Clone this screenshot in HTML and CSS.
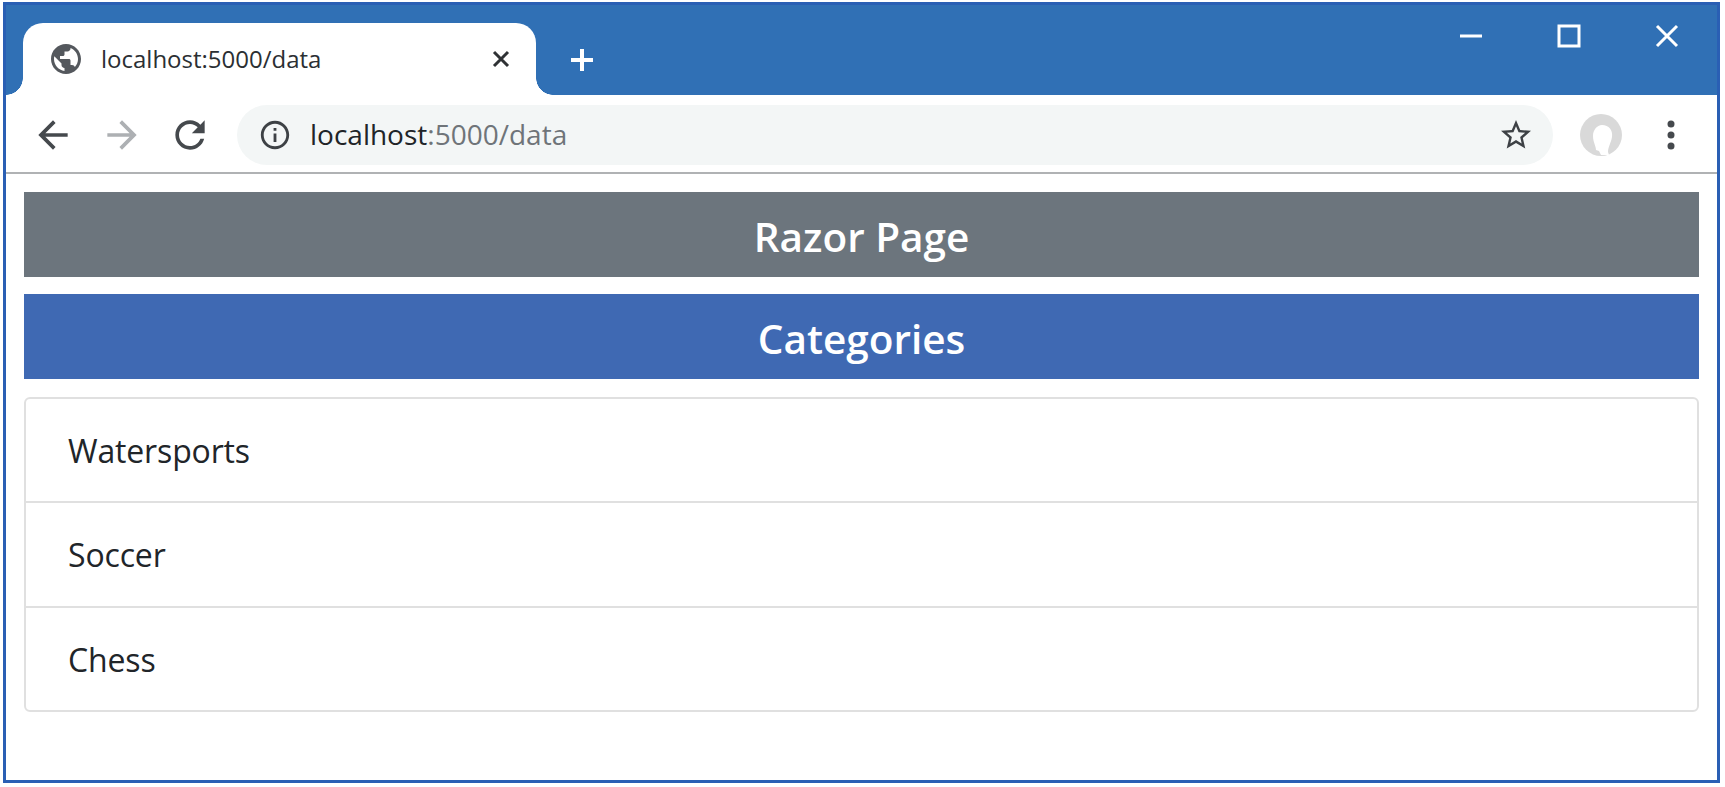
FILE: index.html
```html
<!DOCTYPE html>
<html lang="en">
<head>
    <meta charset="UTF-8">
    <title>localhost:5000/data</title>
    <link rel="stylesheet" href="styles.css">
</head>
<body>
    <div class="window">
        <div class="titlebar">
            <div class="tab">
                <svg class="tab-favicon" viewBox="0 0 24 24"><path d="M12 2C6.48 2 2 6.48 2 12s4.48 10 10 10 10-4.48 10-10S17.52 2 12 2zm-1 17.93c-3.95-.49-7-3.85-7-7.93 0-.62.08-1.21.21-1.79L9 15v1c0 1.1.9 2 2 2v1.93zm6.9-2.54c-.26-.81-1-1.39-1.9-1.39h-1v-3c0-.55-.45-1-1-1H8v-2h2c.55 0 1-.45 1-1V7h2c1.1 0 2-.9 2-2v-.41c2.93 1.19 5 4.06 5 7.41 0 2.08-.8 3.97-2.1 5.39z"/></svg>
                <span class="tab-title">localhost:5000/data</span>
                <svg class="tab-close" viewBox="0 0 18 18"><path d="M2 2l14 14M16 2L2 16"/></svg>
            </div>
            <svg class="new-tab" viewBox="0 0 26 26"><path d="M13 2v22M2 13h22"/></svg>
            <div class="window-controls">
                <div class="control"><svg viewBox="0 0 24 24"><path d="M1 12h22"/></svg></div>
                <div class="control"><svg viewBox="0 0 24 24"><path d="M2 2h20v20H2z"/></svg></div>
                <div class="control"><svg viewBox="0 0 24 24"><path d="M2 2l20 20M22 2L2 22"/></svg></div>
            </div>
        </div>

        <div class="toolbar">
            <svg class="nav-icon" viewBox="0 0 24 24"><path d="M20 11H7.83l5.59-5.59L12 4l-8 8 8 8 1.41-1.41L7.83 13H20v-2z"/></svg>
            <svg class="nav-icon disabled" viewBox="0 0 24 24"><path d="M4 11h12.17l-5.59-5.59L12 4l8 8-8 8-1.41-1.41L16.17 13H4v-2z"/></svg>
            <svg class="nav-icon" viewBox="0 0 24 24"><path d="M17.65 6.35C16.2 4.9 14.21 4 12 4c-4.42 0-7.99 3.58-7.99 8s3.57 8 7.99 8c3.73 0 6.84-2.55 7.73-6h-2.08c-.82 2.33-3.04 4-5.65 4-3.31 0-6-2.69-6-6s2.69-6 6-6c1.66 0 3.14.69 4.22 1.78L13 11h7V4l-2.35 2.35z"/></svg>
            <div class="omnibox">
                <svg class="info-icon" viewBox="0 0 24 24"><path d="M11 7h2v2h-2zm0 4h2v6h-2zm1-9C6.48 2 2 6.48 2 12s4.48 10 10 10 10-4.48 10-10S17.52 2 12 2zm0 18c-4.41 0-8-3.59-8-8s3.59-8 8-8 8 3.59 8 8-3.59 8-8 8z"/></svg>
                <span class="url">localhost<span class="url-path">:5000/data</span></span>
                <svg class="star-icon" viewBox="0 0 24 24"><path d="M22 9.24l-7.19-.62L12 2 9.19 8.63 2 9.24l5.46 4.73L5.82 21 12 17.27 18.18 21l-1.63-7.03L22 9.24zM12 15.4l-3.76 2.27 1-4.28-3.32-2.88 4.38-.38L12 6.1l1.71 4.04 4.38.38-3.32 2.88 1 4.28L12 15.4z"/></svg>
            </div>
            <svg class="avatar" viewBox="0 0 42 42">
                <circle class="avatar-bg" cx="21" cy="21" r="21"/>
                <path class="avatar-hole" d="M22 11c7 0 11 5 10 12-1 6-4 10-4 15l1 3h-8l-2-4-3-1c0-4-3-8-3-14 0-6 4-11 9-11z"/>
            </svg>
            <svg class="menu-icon" viewBox="0 0 8 30"><circle cx="4" cy="4" r="3.5"/><circle cx="4" cy="15" r="3.5"/><circle cx="4" cy="26" r="3.5"/></svg>
        </div>

        <div class="content">
            <h4 class="banner banner-secondary">Razor Page</h4>
            <h4 class="banner banner-primary">Categories</h4>
            <ul class="list">
                <li class="list-item">Watersports</li>
                <li class="list-item">Soccer</li>
                <li class="list-item">Chess</li>
            </ul>
        </div>
    </div>
</body>
</html>
```

FILE: styles.css
```css
* {
    box-sizing: border-box;
}
html, body {
    height: 100%;
}
body {
    margin: 0;
    padding: 2px 5px 4px 3px;
    background-color: #fff;
    font-family: "Open Sans", "Noto Sans", sans-serif;
    color: #212529;
    overflow: hidden;
}
svg {
    display: block;
    flex: none;
}
.window {
    height: 100%;
    border: 3px solid #2a5fb4;
    display: flex;
    flex-direction: column;
}

/* title bar */
.titlebar {
    height: 90px;
    background-color: #3070b5;
    display: flex;
    align-items: flex-start;
    flex: none;
}
.tab {
    position: relative;
    width: 513px;
    height: 72px;
    margin: 18px 0 0 17px;
    padding: 0 26px 0 25px;
    background-color: #fff;
    border-radius: 20px 20px 0 0;
    display: flex;
    align-items: center;
}
.tab::before,
.tab::after {
    content: "";
    position: absolute;
    bottom: 0;
    width: 17px;
    height: 17px;
}
.tab::before {
    left: -17px;
    background: radial-gradient(circle at 0 0, #3070b5 16.5px, #fff 17px);
}
.tab::after {
    right: -17px;
    background: radial-gradient(circle at 100% 0, #3070b5 16.5px, #fff 17px);
}
.tab-favicon {
    width: 36px;
    height: 36px;
    fill: #54585d;
}
.tab-title {
    margin-left: 17px;
    padding-bottom: 2px;
    font-size: 24px;
    color: #2b2f33;
}
.tab-close {
    width: 18px;
    height: 18px;
    margin-left: auto;
    fill: none;
    stroke: #2f3235;
    stroke-width: 3;
}
.new-tab {
    width: 26px;
    height: 26px;
    margin: 42px 0 0 33px;
    fill: none;
    stroke: #fff;
    stroke-width: 4;
}
.window-controls {
    margin-left: auto;
    padding-right: 1px;
    display: flex;
}
.control {
    width: 98px;
    height: 62px;
    display: flex;
    align-items: center;
    justify-content: center;
}
.control svg {
    width: 24px;
    height: 24px;
    fill: none;
    stroke: #fff;
    stroke-width: 3;
}

/* toolbar */
.toolbar {
    height: 79px;
    padding: 10px 0 7px 25px;
    background-color: #fff;
    border-bottom: 2px solid #b0b2b4;
    display: flex;
    align-items: center;
    flex: none;
}
.nav-icon {
    width: 44px;
    height: 44px;
    margin-right: 25px;
    fill: #45494d;
}
.nav-icon + .nav-icon {
    margin-right: 24px;
}
.nav-icon.disabled {
    fill: #adb0b3;
}
.omnibox {
    width: 1316px;
    height: 60px;
    margin-left: 1px;
    padding: 0 19px 0 21px;
    background-color: #f3f6f6;
    border-radius: 30px;
    display: flex;
    align-items: center;
}
.info-icon {
    width: 34px;
    height: 34px;
    fill: #3d4145;
}
.url {
    margin-left: 18px;
    padding-bottom: 2px;
    font-size: 28px;
    color: #202428;
}
.url-path {
    color: #6f7479;
}
.star-icon {
    width: 36px;
    height: 36px;
    margin-left: auto;
    fill: #3d4145;
}
.avatar {
    width: 42px;
    height: 42px;
    margin-left: 27px;
}
.avatar-bg {
    fill: #d9d9d9;
}
.avatar-hole {
    fill: #fff;
}
.menu-icon {
    width: 8px;
    height: 30px;
    margin-left: 45px;
    fill: #45494d;
}

/* page */
.content {
    flex: 1;
    padding: 18px 18px 0 18px;
    background-color: #fff;
}
.banner {
    height: 85px;
    margin: 0 0 17px;
    padding-top: 3px;
    font-size: 40.5px;
    font-weight: 600;
    color: #fff;
    display: flex;
    align-items: center;
    justify-content: center;
}
.banner-secondary {
    background-color: #6c757d;
}
.banner-primary {
    background-color: #3f69b3;
}
.list {
    list-style-type: none;
    margin: 18px 0 0;
    padding: 0;
    border: 2px solid #e0e0e0;
    border-radius: 6px;
}
.list-item {
    height: 102px;
    padding-left: 42px;
    font-size: 32px;
    letter-spacing: -0.15px;
    display: flex;
    align-items: center;
}
.list-item + .list-item {
    height: 105px;
    border-top: 2px solid #e0e0e0;
}
.list-item:last-child {
    height: 104px;
}
```
